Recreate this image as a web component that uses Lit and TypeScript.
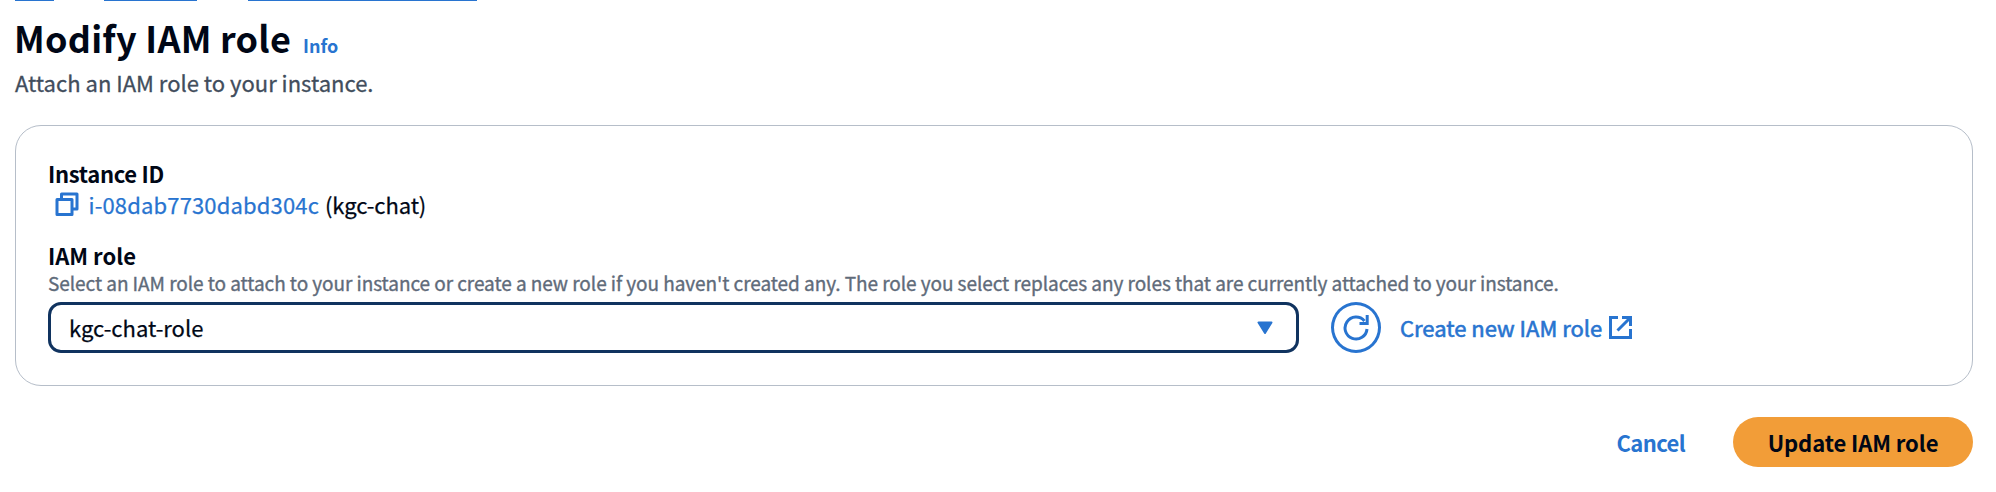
import { LitElement, html, css } from "lit";

class AppRoot extends LitElement {
  static styles = css`
    :host {
      display: block;
      height: 492px;
      overflow: hidden;
      box-sizing: border-box;
      background: #fff;
      color: #000716;
      font-family: "Noto Sans CJK SC", "Open Sans", sans-serif;
      font-size: 22px;
      line-height: 30px;
      white-space: nowrap;
    }
    .crumbs { display: flex; height: 1px; padding-left: 15px; }
    .crumbs i { background: #2874d0; height: 1px; }
    .c1 { width: 39px; margin-right: 50px; }
    .c2 { width: 93px; margin-right: 51px; }
    .c3 { width: 229px; }
    .page { padding: 15px 23px 0 15px; }
    header { display: flex; align-items: baseline; gap: 12px; height: 43px; }
    h1 { margin: 0; font-size: 36px; line-height: 42px; letter-spacing: 0.24px; font-weight: 700; margin-left: -1px; }
    .info { font-size: 18px; font-weight: 700; line-height: 24px; }
    .link { color: #2874d0; }
    .desc { color: #414d5c; height: 30px; margin-top: 8px; -webkit-text-stroke: 0.3px currentColor; }
    .card {
      box-sizing: border-box;
      height: 261px;
      margin-top: 28px;
      border: 1px solid #b6bec9;
      border-radius: 26px;
      padding: 32px;
    }
    .label { font-weight: 700; height: 30px; }
    .l1 { letter-spacing: -0.32px; }
    .l2 { margin-top: 21px; }
    .row { display: flex; align-items: center; height: 31px; -webkit-text-stroke: 0.25px currentColor; }
    .copy { margin: 1px 10px 0 6.5px; }
    .id { letter-spacing: 0.15px; margin-right: 6px; }
    .name { letter-spacing: -0.1px; }
    .hint {
      font-size: 19px;
      letter-spacing: -0.06px;
      color: #5f6b7a;
      line-height: 28px;
      height: 33px;
      margin-top: -1px;
      -webkit-text-stroke: 0.35px currentColor;
    }
    .controls { display: flex; align-items: center; height: 51px; }
    .select {
      box-sizing: border-box;
      display: flex;
      align-items: center;
      justify-content: space-between;
      width: 1251px;
      height: 51px;
      border: 3px solid #10335f;
      border-radius: 13px;
      padding: 0 23px 0 18px;
    }
    .value { padding-bottom: 2px; -webkit-text-stroke: 0.25px currentColor; }
    .refresh {
      box-sizing: border-box;
      display: grid;
      place-items: center;
      width: 50px;
      height: 51px;
      margin: 0 19px 0 32px;
      border: 3px solid #2874d0;
      border-radius: 50%;
    }
    .create { display: flex; align-items: center; gap: 7px; -webkit-text-stroke: 0.6px currentColor; }
    .create span { padding-bottom: 2px; }
    svg { display: block; flex: none; fill: none; stroke: #2874d0; stroke-width: 3; }
    footer { display: flex; justify-content: flex-end; align-items: center; height: 50px; margin-top: 31px; font-weight: 700; }
    .cancel { letter-spacing: -0.6px; margin-right: 48px; }
    .update {
      display: grid;
      place-items: center;
      width: 240px;
      height: 50px;
      border-radius: 25px;
      background: #f29d38;
      letter-spacing: -0.08px;
    }
  `;

  render() {
    return html`
      <div class="crumbs"><i class="c1"></i><i class="c2"></i><i class="c3"></i></div>
      <div class="page">
        <header><h1>Modify IAM role</h1><span class="info link">Info</span></header>
        <div class="desc">Attach an IAM role to your instance.</div>
        <section class="card">
          <div class="label l1">Instance ID</div>
          <div class="row">
            <svg class="copy" width="24" height="24" viewBox="0 0 24 24" stroke-linejoin="round">
              <path d="M2 7.5h15v15h-15zM6.5 7.5v-5.500h15.500v15h-5" />
            </svg>
            <span class="id link">i-08dab7730dabd304c</span><span class="name">(kgc-chat)</span>
          </div>
          <div class="label l2">IAM role</div>
          <div class="hint">Select an IAM role to attach to your instance or create a new role if you haven't created any. The role you select replaces any roles that are currently attached to your instance.</div>
          <div class="controls">
            <div class="select">
              <span class="value">kgc-chat-role</span>
              <svg width="16" height="14" viewBox="0 0 16 14" stroke-linejoin="round">
                <path d="M1.500 1.500h13l-6.500 10.500z" fill="#2874d0" stroke-width="2" />
              </svg>
            </div>
            <div class="refresh">
              <svg width="26" height="26" viewBox="0 0 26 26">
                <path d="M24 14a11 11 0 1 1-2.600-8.100M24.200 0v8.500M25.700 8.500h-9.200" />
              </svg>
            </div>
            <span class="create link"><span>Create new IAM role</span>
              <svg width="23" height="23" viewBox="0 0 23 23">
                <path d="M9 1.500H1.500v20h20V13M13 1.500h8.500V10M21 2L8.500 14.500" />
              </svg>
            </span>
          </div>
        </section>
        <footer><span class="cancel link">Cancel</span><span class="update">Update IAM role</span></footer>
      </div>
    `;
  }
}
customElements.define("app-root", AppRoot);
